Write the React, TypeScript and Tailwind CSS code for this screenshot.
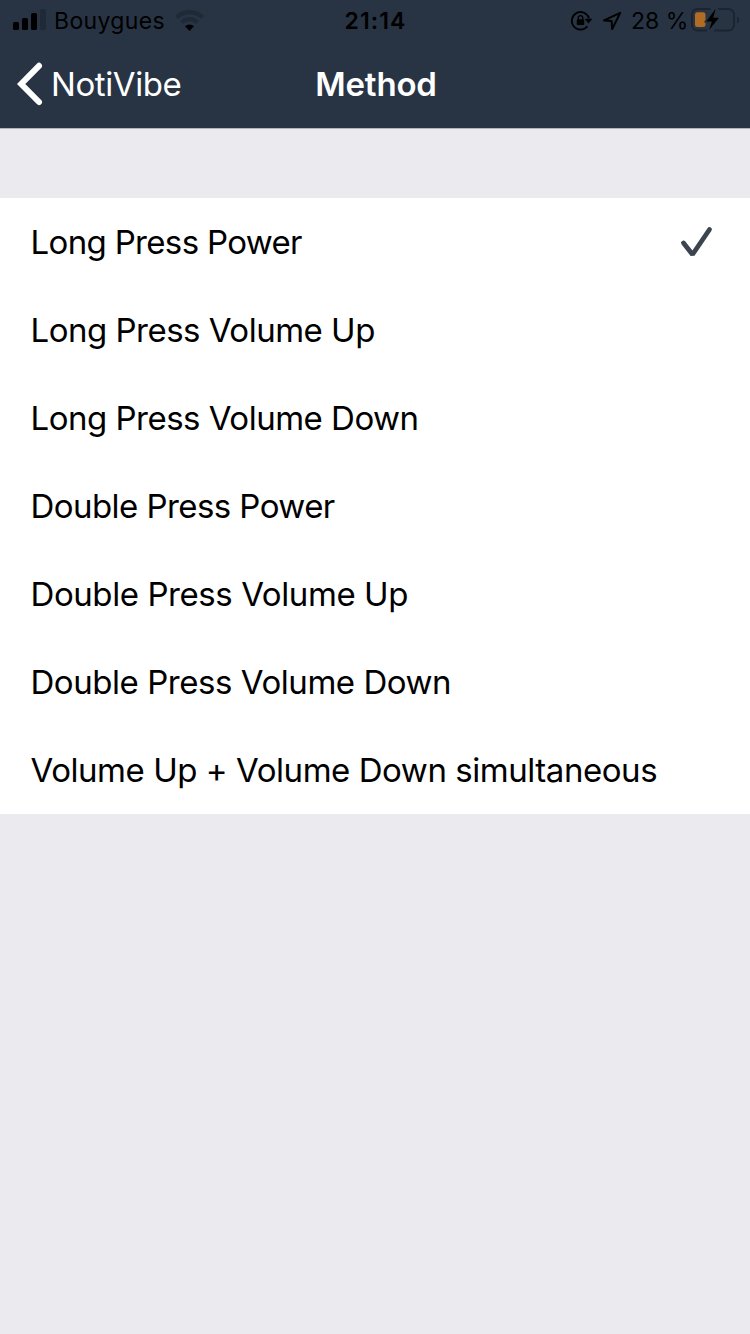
const rows: [string, string][] = [
  ["Long Press Power", "tracking-[-0.66px]"],
  ["Long Press Volume Up", "tracking-[-0.5px]"],
  ["Long Press Volume Down", "tracking-[-0.5px]"],
  ["Double Press Power", "tracking-[-0.56px]"],
  ["Double Press Volume Up", "tracking-[-0.42px]"],
  ["Double Press Volume Down", "tracking-[-0.45px]"],
  ["Volume Up + Volume Down simultaneous", "tracking-[-0.45px]"],
];

function Signal() {
  return (
    <svg className="ml-3 h-10 w-[35px] shrink-0" viewBox="12 0 35 40">
      <rect x="13" y="22" width="6" height="8" rx="1.5" />
      <rect x="22" y="18" width="6" height="12" rx="1.5" />
      <rect x="31" y="13" width="6" height="17" rx="1.5" />
      <rect x="40" y="9" width="6" height="21" rx="1.5" fill="#202a37" />
    </svg>
  );
}

function Wifi() {
  return (
    <svg className="h-10 w-[32px] shrink-0" viewBox="174 0 32 40">
      <g fill="none" stroke="#202a37" strokeWidth="4.2">
        <path d="M176.500 17.400a18.500 18.500 0 0 1 26 0" />
        <path d="M181.500 22.400a11.400 11.400 0 0 1 16 0" />
      </g>
      <path d="M185 26.300a6.400 6.400 0 0 1 9 0l-4.500 4.700z" />
    </svg>
  );
}

function RotationLock() {
  return (
    <svg className="h-10 w-[24px] shrink-0" viewBox="570 0 24 40">
      <path d="M587.500 26.300A8.800 8.800 0 1 1 589 18.300" fill="none" stroke="#000" strokeWidth="1.8" />
      <path d="M584.600 18.800h7.800l-3.900 4.800z" />
      <rect x="576.800" y="19.200" width="7.400" height="5.800" rx=".8" />
      <path d="M578.300 19.500v-1.700a2.200 2.200 0 0 1 4.400 0v1.700" fill="none" stroke="#000" strokeWidth="1.4" />
    </svg>
  );
}

function Location() {
  return (
    <svg className="ml-2 h-10 w-[20px] shrink-0" viewBox="602 0 20 40">
      <path d="M620.200 12.800 604 20.400l7.600.7.600 8z" fill="none" stroke="#000" strokeWidth="2" strokeLinejoin="round" />
    </svg>
  );
}

function Battery() {
  return (
    <svg className="h-10 w-[50px] shrink-0" viewBox="690 0 50 40">
      <path d="M710.500 9h-13a5.500 5.500 0 0 0-5.500 5.500v10.500a5.500 5.500 0 0 0 5.500 5.500h9.500M718 9h10.500a5.500 5.500 0 0 1 5.500 5.500v10.500a5.500 5.500 0 0 1-5.500 5.500h-14.500" fill="none" stroke="#1b2430" strokeWidth="2" />
      <path d="M737 16.500c3 1 3 6 0 7z" fill="#1b2430" />
      <path d="M697.500 12.300h5.500a2.500 2.500 0 0 1 2.500 2.500v5l-1.500 2.200 1.500 1v1.500a2.500 2.500 0 0 1-2.500 2.500h-5.500a2.500 2.500 0 0 1-2.500-2.500v-9.700a2.500 2.500 0 0 1 2.500-2.500z" fill="#b06c22" />
      <path d="m715.700 8.800-9.500 12.800h5.700l-2.800 8.500 9.900-12.300h-5.800z" />
    </svg>
  );
}

export default function App() {
  return (
    <div className="min-h-[1334px] w-[750px] bg-[#ebeaef] font-[Inter,sans-serif] text-black">
      <header className="h-[129px] border-b border-[#b4b5ba] bg-[#283444]">
        <div className="grid h-10 grid-cols-[1fr_80px_1fr] items-center text-[23px]">
          <div className="flex items-center">
            <Signal />
            <span className="ml-[7px] w-[120px] pt-[2px] tracking-[0.35px] whitespace-nowrap">Bouygues</span>
            <Wifi />
          </div>
          <div className="pt-[2px] pl-px text-center font-semibold tracking-[1.1px] whitespace-nowrap">21:14</div>
          <div className="flex items-center justify-end pr-[10px]">
            <RotationLock />
            <Location />
            <span className="ml-[9px] w-[59px] pt-[2px] whitespace-nowrap">28 %</span>
            <Battery />
          </div>
        </div>
        <div className="grid h-[88px] grid-cols-3 items-center text-[33px] text-white">
          <div className="flex items-center">
            <svg className="ml-4 h-[46px] w-[35px]" viewBox="16 61 35 46">
              <path d="M39 65.800 21.200 84l17.800 18" fill="none" stroke="#fff" strokeWidth="6" strokeLinecap="round" strokeLinejoin="miter" />
            </svg>
            <span className="pt-[2px] tracking-[-0.4px]">NotiVibe</span>
          </div>
          <div className="pt-[2px] pl-[2px] text-center font-semibold tracking-[-0.2px]">Method</div>
        </div>
      </header>
      <ul className="mt-[69px] bg-white">
        {rows.map(([label, tracking], i) => (
          <li key={label} className={"flex h-[88px] items-center justify-between pt-[2px] pr-[35px] pl-[30.5px] text-[33px] " + tracking}>
            {label}
            {i === 0 && (
              <svg className="h-[34px] w-[36px]" viewBox="679 226 36 34">
                <path d="m683.500 243 9 11.500 17-25" fill="none" stroke="#3b444f" strokeWidth="4.800" strokeLinecap="round" strokeLinejoin="bevel" />
              </svg>
            )}
          </li>
        ))}
      </ul>
    </div>
  );
}
